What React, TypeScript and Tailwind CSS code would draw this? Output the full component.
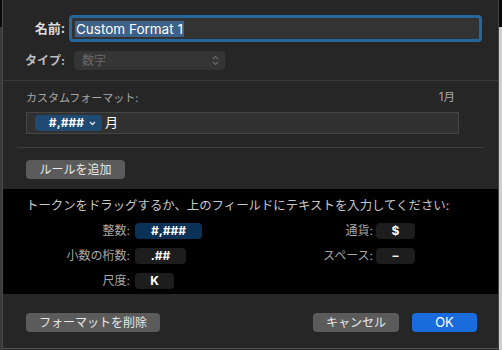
import React from "react";

const font = { fontFamily: 'Inter, "Noto Sans CJK JP", sans-serif' };

function Token({ children, w, blue }: { children: React.ReactNode; w: string; blue?: boolean }) {
  return (
    <div
      className={`${w} h-[16px] rounded-[4px] flex items-center justify-center text-[12px] font-bold text-white leading-none ${
        blue ? "bg-[#0c3157]" : "bg-[#1d1d1d]"
      }`}
    >
      {children}
    </div>
  );
}

export default function App() {
  return (
    <div className="w-[502px] h-[350px] flex bg-[#262626] overflow-hidden" style={font}>
      <div className="w-[2px] flex flex-col">
        <div className="h-[27px] bg-[#0a0a0a]" />
        <div className="flex-1 bg-[#3a3a3a]" />
      </div>
      <div className="w-[497px] h-[349px] flex flex-col bg-[#262626] border-l border-[#4a4a4a] border-r border-r-[#444] border-b border-b-[#555]">
        {/* Section 1 */}
        <div className="h-[80px] pt-[15px]">
          <div className="flex items-center h-[27px]">
            <div className="w-[62px] text-right text-[13px] font-bold text-[#dcdcdc]">名前:</div>
            <div className="ml-[4px] w-[413px] h-[27px] rounded-[4px] border-[3px] border-[#23679c] bg-[#333] flex items-center pl-[3px]">
              <span className="bg-[#3e6189] text-white text-[13.5px] leading-[16px] px-[1px]">Custom Format 1</span>
            </div>
          </div>
          <div className="flex items-center h-[19px] mt-[9px]">
            <div className="w-[62px] text-right text-[12px] font-bold text-[#bdbdbd]">タイプ:</div>
            <div className="ml-[9px] w-[151px] h-[19px] rounded-[4px] bg-[#353535] flex items-center justify-between pl-[8px] pr-[6px]">
              <span className="text-[12px] text-[#6a6a6a]">数字</span>
              <svg width="7" height="11" viewBox="0 0 7 11" fill="none" stroke="#6a6a6a" strokeWidth="1.2">
                <path d="M1 4 L3.5 1.5 L6 4" />
                <path d="M1 7 L3.5 9.5 L6 7" />
              </svg>
            </div>
          </div>
        </div>
        <div className="h-px bg-[#3a3a3a]" />
        {/* Section 2 */}
        <div className="h-[66px] px-[23px] pt-[9px]">
          <div className="flex justify-between items-center h-[16px] text-[11px] text-[#a8a8a8] pr-[20px]">
            <span>カスタムフォーマット:</span>
            <span className="text-[11.5px]">1月</span>
          </div>
          <div className="mt-[6px] w-[433px] h-[22px] bg-[#313131] border border-[#454545] flex items-center pl-[8px]">
            <div className="w-[67px] h-[16px] rounded-[4px] bg-[#1f4a72] flex items-center justify-end pr-[6px] gap-[5px]">
              <span className="text-[12px] font-bold text-white leading-none">#,###</span>
              <svg width="7" height="5" viewBox="0 0 7 5" fill="none" stroke="#e5e5e5" strokeWidth="1.3">
                <path d="M1 1 L3.5 3.5 L6 1" />
              </svg>
            </div>
            <span className="ml-[3px] text-[13px] text-white">月</span>
          </div>
        </div>
        <div className="mx-[14px] h-px bg-[#3d3d3d]" />
        <div className="h-[41px] px-[23px] pt-[12px]">
          <div className="w-[99px] h-[19px] rounded-[4px] bg-[#5b5b5b] flex items-center justify-center text-[12px] text-[#e8e8e8]">
            ルールを追加
          </div>
        </div>
        {/* Token area */}
        <div className="h-[105px] bg-black pl-[23px] pt-[9px]">
          <div className="text-[12.4px] text-[#c8c8c8] h-[16px] leading-[16px] whitespace-nowrap">
            トークンをドラッグするか、上のフィールドにテキストを入力してください:
          </div>
          <div className="flex mt-[8px]">
            <div className="flex flex-col gap-[7px]">
              <div className="flex items-center">
                <div className="w-[104px] text-right text-[12px] text-[#a8a8a8]">整数:</div>
                <div className="ml-[5px]"><Token w="w-[67px]" blue>#,###</Token></div>
              </div>
              <div className="flex items-center">
                <div className="w-[104px] text-right text-[12px] text-[#a8a8a8]">小数の桁数:</div>
                <div className="ml-[5px]"><Token w="w-[51px]">.##</Token></div>
              </div>
              <div className="flex items-center">
                <div className="w-[104px] text-right text-[12px] text-[#a8a8a8]">尺度:</div>
                <div className="ml-[5px]"><Token w="w-[39px]">K</Token></div>
              </div>
            </div>
            <div className="flex flex-col gap-[7px] ml-[67px]">
              <div className="flex items-center">
                <div className="w-[104px] text-right text-[12px] text-[#a8a8a8]">通貨:</div>
                <div className="ml-[3px]"><Token w="w-[39px]">$</Token></div>
              </div>
              <div className="flex items-center">
                <div className="w-[104px] text-right text-[12px] text-[#a8a8a8]">スペース:</div>
                <div className="ml-[3px]"><Token w="w-[39px]">–</Token></div>
              </div>
            </div>
          </div>
        </div>
        {/* Footer */}
        <div className="flex-1 flex items-start pt-[19px] pl-[23px] pr-[21px]">
          <div className="w-[134px] h-[19px] rounded-[4px] bg-[#5b5b5b] flex items-center justify-center text-[12px] text-[#e8e8e8]">
            フォーマットを削除
          </div>
          <div className="flex-1" />
          <div className="w-[86px] h-[19px] rounded-[4px] bg-[#5b5b5b] flex items-center justify-center text-[12px] text-[#e8e8e8]">
            キャンセル
          </div>
          <div className="ml-[13px] w-[65px] h-[19px] rounded-[4px] bg-[#1a6bdc] flex items-center justify-center text-[13px] text-white">
            OK
          </div>
        </div>
      </div>
      <div className="w-[3px] flex flex-col">
        <div className="h-[27px] bg-[#0a0a0a]" />
        <div className="flex-1 bg-[#cfcfcf]" />
      </div>
    </div>
  );
}
